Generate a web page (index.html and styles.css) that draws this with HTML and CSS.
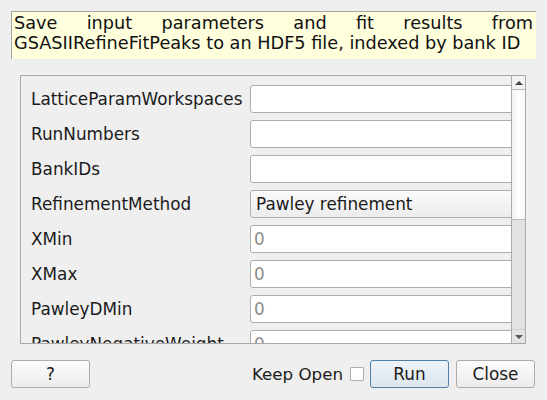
FILE: index.html
```html
<!DOCTYPE html>
<html>
<head>
<meta charset="utf-8">
<link rel="stylesheet" href="styles.css">
</head>
<body>
<div class="desc">Save input parameters and fit results from GSASIIRefineFitPeaks to an HDF5 file, indexed by bank ID</div>
<div class="frame">
  <div class="viewport">
    <div class="grid">
      <div class="label">LatticeParamWorkspaces</div><div class="field"></div>
      <div class="label">RunNumbers</div><div class="field"></div>
      <div class="label">BankIDs</div><div class="field"></div>
      <div class="label">RefinementMethod</div><div class="field combo">Pawley refinement</div>
      <div class="label">XMin</div><div class="field ph">0</div>
      <div class="label">XMax</div><div class="field ph">0</div>
      <div class="label">PawleyDMin</div><div class="field ph">0</div>
      <div class="label">PawleyNegativeWeight</div><div class="field ph">0</div>
    </div>
  </div>
  <div class="scrollbar">
    <div class="sb-btn up"><span class="tri-up"></span></div>
    <div class="sb-handle"></div>
    <div class="sb-trough"></div>
    <div class="sb-btn down"><span class="tri-down"></span></div>
  </div>
</div>
<div class="buttons">
  <div class="btn help">?</div>
  <div class="spacer"></div>
  <div class="keep">Keep Open</div>
  <div class="check"></div>
  <div class="btn run">Run</div>
  <div class="btn close">Close</div>
</div>
</body>
</html>
```
FILE: styles.css
```css
html, body {
  margin: 0;
  padding: 0;
  background: #efefef;
  font-family: "DejaVu Sans", sans-serif;
  font-size: 16.85px;
  color: #1b1b1b;
}
body {
  width: 547px;
  height: 400px;
  overflow: hidden;
}
.desc {
  margin: 11px 11px 0 11px;
  height: 48px;
  box-sizing: border-box;
  background: #ffffdd;
  border-top: 1px solid #a6a6a6;
  border-left: 1px solid #a6a6a6;
  padding: 2px 3px 0 2px;
  font-size: 17.7px;
  line-height: 19.5px;
  text-align: justify;
  text-align-last: left;
  color: #111;
}
.frame {
  margin: 16px 0 0 20px;
  width: 506px;
  height: 269px;
  box-sizing: border-box;
  border: 1px solid #a9a9a9;
  display: flex;
  background: #efefef;
}
.viewport {
  flex: 1;
  overflow: hidden;
  min-width: 0;
}
.grid {
  display: grid;
  grid-template-columns: 219px 300px;
  row-gap: 7px;
  padding: 9px 0 0 10px;
  align-items: center;
}
.label {
  height: 28px;
  line-height: 28px;
  white-space: nowrap;
  color: #1b1b1b;
}
.field {
  height: 28px;
  box-sizing: border-box;
  background: #fff;
  border: 1px solid #adadad;
  border-radius: 3px;
  line-height: 26px;
  padding-left: 3px;
}
.field.combo {
  background: linear-gradient(#fafafa, #ececec);
  padding-left: 5px;
  color: #1b1b1b;
}
.field.ph {
  color: #8c8c8c;
}
.scrollbar {
  width: 13px;
  border-left: 1px solid #ababab;
  display: flex;
  flex-direction: column;
}
.sb-btn {
  height: 13px;
  display: flex;
  align-items: center;
  justify-content: center;
  background: #f3f3f3;
}
.sb-btn.up { border-bottom: 1px solid #b8b8b8; }
.sb-btn.down { border-top: 1px solid #d0d0d0; background: #e4e4e4; }
.tri-up {
  width: 0; height: 0;
  border-left: 4px solid transparent;
  border-right: 4px solid transparent;
  border-bottom: 4px solid #444;
}
.tri-down {
  width: 0; height: 0;
  border-left: 4px solid transparent;
  border-right: 4px solid transparent;
  border-top: 4px solid #555;
}
.sb-handle {
  height: 129px;
  background: linear-gradient(to right, #f2f2f2, #ffffff 60%, #f6f6f6);
  border-bottom: 1px solid #b8b8b8;
}
.sb-trough {
  flex: 1;
  background: #e3e3e3;
}
.buttons {
  display: flex;
  align-items: center;
  margin-top: 16px;
  padding: 0 12px 0 11px;
}
.spacer { flex: 1; }
.btn {
  width: 79px;
  height: 28px;
  box-sizing: border-box;
  border: 1px solid #acacac;
  border-radius: 3px;
  background: linear-gradient(#fbfbfb, #ececec);
  text-align: center;
  line-height: 26px;
}
.btn.run {
  margin-left: 6px;
  border-color: #4d7fa8;
  background: linear-gradient(#eef3f8, #dde6ee);
}
.btn.close {
  margin-left: 7px;
}
.keep {
  white-space: nowrap;
  font-size: 16.7px;
}
.check {
  width: 14px;
  height: 14px;
  box-sizing: border-box;
  border: 1px solid #acacac;
  background: #fff;
  margin-left: 7px;
  border-radius: 1px;
}
```
